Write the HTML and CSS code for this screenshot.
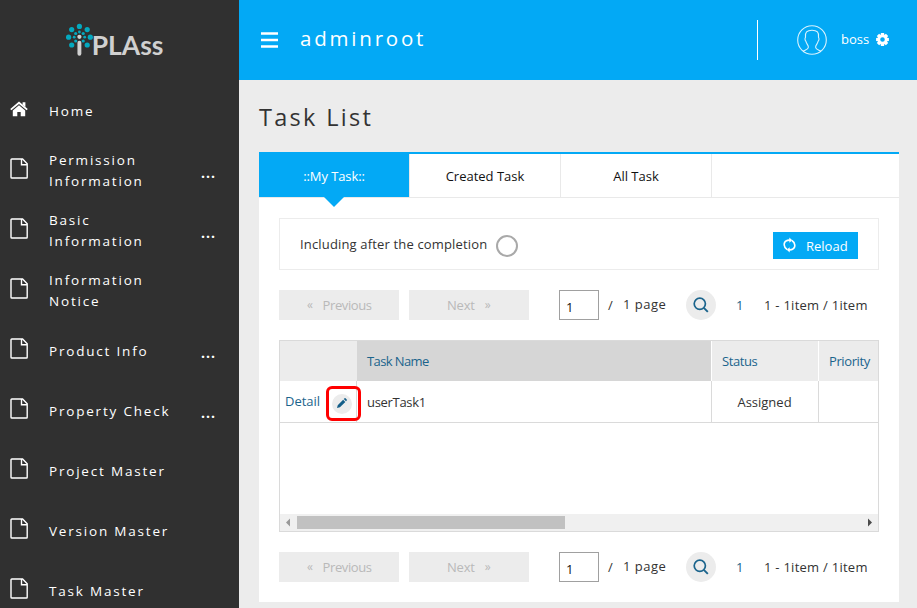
FILE: index.html
```html
<!DOCTYPE html>
<html lang="en">
<head>
<meta charset="utf-8">
<title>Task List</title>
<link rel="stylesheet" href="styles.css">
</head>
<body>
<svg class="defs" width="0" height="0">
  <symbol id="doc" viewBox="0 0 18 21"><path d="M1.8 1H12.6L17.2 5.8V19.2Q17.2 20 16.4 20H1.8Q1 20 1 19.2V1.8Q1 1 1.8 1ZM11.5 1V6.8H17" fill="none" stroke="#fff" stroke-width="1.4"/></symbol>
  <symbol id="search" viewBox="0 0 16 16"><circle cx="6.8" cy="6.8" r="5.6" fill="none" stroke="#1b648c" stroke-width="1.7"/><path d="M10.8 10.8L14.8 14.8" stroke="#1b648c" stroke-width="1.9"/></symbol>
</svg>
<div class="app">
  <aside class="sidebar">
    <div class="logo">
      <svg width="106" height="50" viewBox="65 15 106 50">
        <g fill="#04a9bf"><circle cx="79.4" cy="26.4" r="2.6"/><circle cx="71.7" cy="29.6" r="2.6"/><circle cx="87.2" cy="29.6" r="2.6"/><circle cx="68.6" cy="37.2" r="2.6"/><circle cx="90.3" cy="37.2" r="2.6"/><circle cx="71.7" cy="45" r="2.6"/><circle cx="87.2" cy="45" r="2.6"/>
        <circle cx="79.4" cy="32" r="1.4"/><circle cx="75.7" cy="33.5" r="1.6"/><circle cx="83.2" cy="33.5" r="1.6"/><circle cx="74.2" cy="37.2" r="1.4"/><circle cx="84.7" cy="37.2" r="1.4"/><circle cx="75.7" cy="41" r="1.6"/><circle cx="83.2" cy="41" r="1.6"/></g>
        <circle cx="79.4" cy="36.8" r="2.1" fill="#d0d0d0"/>
        <path d="M79.4 42.8V53.8" stroke="#d0d0d0" stroke-width="3.9" stroke-linecap="round"/>
        <text x="91.7" y="55.3" textLength="71.7" lengthAdjust="spacingAndGlyphs">PLAss</text>
      </svg>
    </div>
    <nav>
      <a class="item"><svg class="home" width="18" height="16" viewBox="0 0 18 16"><path d="M.8 8.6L9 1.7L17.2 8.6" fill="none" stroke="#fff" stroke-width="1.8"/><path d="M12.6 1.2H15.4V6L12.6 3.7ZM9 4.2L15.2 9.4V15.2H10.7V11H7.3V15.2H2.8V9.4Z" fill="#fff"/></svg><span>Home</span></a>
      <a class="item"><svg width="18" height="21"><use href="#doc"/></svg><span>Permission<br>Information</span><b>...</b></a>
      <a class="item"><svg width="18" height="21"><use href="#doc"/></svg><span>Basic<br>Information</span><b>...</b></a>
      <a class="item"><svg width="18" height="21"><use href="#doc"/></svg><span>Information<br>Notice</span></a>
      <a class="item"><svg width="18" height="21"><use href="#doc"/></svg><span>Product Info</span><b>...</b></a>
      <a class="item"><svg width="18" height="21"><use href="#doc"/></svg><span>Property Check</span><b>...</b></a>
      <a class="item"><svg width="18" height="21"><use href="#doc"/></svg><span>Project Master</span></a>
      <a class="item"><svg width="18" height="21"><use href="#doc"/></svg><span>Version Master</span></a>
      <a class="item"><svg width="18" height="21"><use href="#doc"/></svg><span>Task Master</span></a>
    </nav>
  </aside>
  <main>
    <header>
      <svg class="burger" width="17" height="16" viewBox="0 0 17 16"><path d="M0 1.5H17M0 8H17M0 14.5H17" stroke="#fff" stroke-width="2.6"/></svg>
      <span class="tenant">adminroot</span>
      <div class="user">
        <svg width="30" height="30" viewBox="0 0 30 30"><g fill="none" stroke="#fff" stroke-opacity=".85" stroke-width="1.1"><circle cx="15" cy="15" r="14.3"/><path d="M6.2 26.2C9 24.7 11.4 24.3 11.4 22.2C11.4 20 9.1 18.5 8.9 16.3C7.8 15.5 7.8 13 8.5 12.3C7.8 7.6 9.9 5.2 15 5.2S22.2 7.6 21.5 12.3C22.2 13 22.2 15.5 21.1 16.3C20.9 18.5 18.6 20 18.6 22.2C18.6 24.3 21 24.7 23.8 26.2"/></g></svg>
        <span>boss</span>
        <svg class="gear" width="13" height="13" viewBox="-6.5 -6.5 13 13"><g fill="#fff"><path d="M-1.6-6.4H1.6L2-3H-2ZM-1.6 6.4H1.6L2 3H-2ZM-6.4-1.6V1.6L-3 2V-2ZM6.4-1.6V1.6L3 2V-2Z"/><path transform="rotate(45)" d="M-1.6-6.4H1.6L2-3H-2ZM-1.6 6.4H1.6L2 3H-2ZM-6.4-1.6V1.6L-3 2V-2ZM6.4-1.6V1.6L3 2V-2Z"/></g><circle r="3.6" fill="none" stroke="#fff" stroke-width="2.6"/></svg>
      </div>
    </header>
    <h1>Task List</h1>
    <section class="panel">
      <div class="tabs"><a class="tab active">::My Task::</a><a class="tab">Created Task</a><a class="tab">All Task</a></div>
      <div class="filter">
        <span>Including after the completion</span><i class="radio"></i>
        <button class="reload"><svg width="13" height="16" viewBox="0 0 14 16"><g fill="none" stroke="#fff" stroke-width="1.7"><path d="M4.4 12.8C.5 10.4.2 5.2 3.7 3.4Q5 2.6 7.7 2.8"/><path d="M9.6 3.2C13.5 5.6 13.8 10.8 10.3 12.6Q9 13.4 6.3 13.2"/></g><path d="M6.8 0L10 2.8L6.8 5.6ZM7.2 10.4L4 13.2L7.2 16Z" fill="#fff"/></svg><span>Reload</span></button>
      </div>
      <div class="pager">
        <span class="btn prev"><small>«</small>Previous</span><span class="btn next">Next<small>»</small></span>
        <span class="page">1</span><span class="slash">/</span><span class="total">1 page</span>
        <span class="go"><svg width="16" height="16"><use href="#search"/></svg></span>
        <span class="num">1</span><span class="count">1 - 1item / 1item</span>
      </div>
      <div class="grid">
        <div class="row head"><div></div><div class="sorted">Task Name</div><div>Status</div><div>Priority</div></div>
        <div class="row body"><div class="detail"><span>Detail</span></div><div class="name">userTask1</div><div class="status">Assigned</div><div></div>
          <span class="mark"><i><svg width="11" height="11" viewBox="0 0 12 12"><path d="M0 11L.8 7.8L6.7 1.9L9.1 4.3L3.2 10.2ZM7.4 1.2L8.3.3Q8.8-.1 9.3.4L10.6 1.7Q11 2.2 10.6 2.7L9.8 3.6Z" fill="#145e88"/></svg></i></span></div>
        <div class="space"></div>
        <div class="scroll"><svg width="17" height="17"><path d="M6 8.5L10 4.5V12.5Z" fill="#999"/></svg><div class="thumb"></div><svg class="right" width="17" height="17"><path d="M11 8.5L7 4.5V12.5Z" fill="#4b4b4b"/></svg></div>
      </div>
      <div class="pager">
        <span class="btn prev"><small>«</small>Previous</span><span class="btn next">Next<small>»</small></span>
        <span class="page">1</span><span class="slash">/</span><span class="total">1 page</span>
        <span class="go"><svg width="16" height="16"><use href="#search"/></svg></span>
        <span class="num">1</span><span class="count">1 - 1item / 1item</span>
      </div>
    </section>
  </main>
</div>
</body>
</html>
```
FILE: styles.css
```css
* { box-sizing: border-box; }
body { margin: 0; height: 608px; overflow: hidden; font: 13px/20px "Open Sans", "Noto Sans", sans-serif; color: #333; background: #ececec; }
svg { display: block; flex: none; }
.defs { position: absolute; }
.app { display: flex; height: 608px; }
.sidebar { width: 239px; flex: none; background: #303030; color: #fff; overflow: hidden; }
.logo { height: 81px; padding: 15px 0 0 65px; }
.logo text { font: 700 27.5px Lato, sans-serif; fill: #d0d0d0; }
.item { display: flex; height: 60px; align-items: center; padding-left: 10px; font-size: 13.5px; line-height: 21px; letter-spacing: 1.8px; }
.item svg { margin: -5px 21px 0 0; }
.item span { width: 152px; }
.item b { font-size: 14px; letter-spacing: 1px; padding-top: 3px; }
main { flex: 1; min-width: 0; }
header { height: 80px; background: #03a9f5; color: #fff; display: flex; align-items: center; padding-left: 22px; }
.tenant { margin-left: 22px; font-size: 20.5px; line-height: 30px; letter-spacing: 2.8px; padding-bottom: 4px; }
.user { margin-left: auto; width: 160px; height: 40px; border-left: 1px solid #fff; display: flex; align-items: center; padding-left: 39px; }
.user span { width: 35px; margin-left: 14px; padding-bottom: 2px; }
.gear { margin-top: -1px; }
h1 { margin: 0; padding: 17px 0 0 20px; height: 72px; font-size: 23.5px; line-height: 40px; font-weight: 400; letter-spacing: 2.3px; color: #333; }
.panel { width: 640px; height: 450px; margin-left: 20px; background: #fff; border-top: 2px solid #03a9f5; }
.tabs { display: flex; height: 44px; border-bottom: 1px solid #e9e9e9; color: #111; }
.tab { width: 151px; height: 43px; border-right: 1px solid #e9e9e9; display: flex; align-items: center; justify-content: center; padding-top: 1px; }
.active { background: #03a9f5; background-clip: padding-box; color: #fff; position: relative; letter-spacing: -.1px; }
.active::after { content: ""; position: absolute; left: 65px; top: 43px; border: 10px solid transparent; border-top-color: #03a9f5; border-bottom: 0; }
.filter { margin: 20px 20px; height: 52px; border: 1px solid #ececec; display: flex; align-items: center; padding: 0 20px; }
.filter > span { width: 187px; letter-spacing: .16px; white-space: nowrap; }
.radio { width: 22px; height: 22px; margin: 3px 0 0 9px; border: 2px solid #a9a9a9; border-radius: 50%; }
.reload { margin: 2px 0 0 auto; width: 85px; height: 27px; padding: 0 0 0 10px; border: 0; background: #03a9f5; color: #fff; font: inherit; display: flex; align-items: center; }
.reload span { margin-left: 10px; padding-top: 1px; }
.pager { display: flex; height: 30px; align-items: center; margin: 0 20px; }
.btn { width: 120px; height: 30px; background: #ececec; color: #b9b9b9; display: flex; align-items: center; margin-right: 10px; letter-spacing: -.4px; }
.btn small { font-size: 12px; }
.prev { padding-left: 28px; } .prev small { margin-right: 10px; }
.next { padding-left: 38px; letter-spacing: -.2px; } .next small { margin-left: 10px; }
.page { margin-left: 20px; width: 40px; height: 30px; border: 1px solid #a0a0a0; padding: 6px 0 0 6px; color: #111; }
.slash { margin-left: 9px; width: 15px; padding-bottom: 1px; } .total { width: 43px; letter-spacing: .5px; padding-bottom: 2px; white-space: nowrap; }
.go { margin-left: 20px; width: 30px; height: 30px; border-radius: 50%; background: #ececec; display: grid; place-items: center; }
.num { margin-left: 20px; width: 28px; color: #1b648c; }
.count { white-space: nowrap; letter-spacing: .26px; }
.grid { margin: 20px; height: 192px; border: 1px solid #dadada; }
.row { display: grid; grid-template-columns: 76px 355px 107px 60px; }
.row > div { border-left: 1px solid #dadada; padding-left: 10px; display: flex; align-items: center; }
.row > div:first-child { border-left: 0; }
.head { height: 40px; color: #1b648c; background: #ececec; letter-spacing: -.4px; }
.head > div { border-color: #fff; }
.head .sorted { background: #d6d6d6; border-color: #ececec; letter-spacing: -.6px; }
.body { height: 42px; border-bottom: 1px solid #dadada; position: relative; }
.row > .name { letter-spacing: -.3px; }
.row > .detail { color: #1b648c; padding: 0 0 1px 5px; }
.row > .status { justify-content: center; padding: 0 1px 0 0; }
.mark { position: absolute; left: 46px; top: 5px; width: 35px; height: 35px; border: 3px solid #f00; border-radius: 6px; display: grid; place-items: center; }
.mark i { width: 20px; height: 20px; margin-left: -3px; border-radius: 50%; background: #ececec; display: grid; place-items: center; }
.space { height: 91px; }
.scroll { display: flex; height: 17px; align-items: center; background: #f0f0f0; }
.thumb { width: 268px; height: 13px; background: #c1c1c1; }
.right { margin-left: auto; }
```
